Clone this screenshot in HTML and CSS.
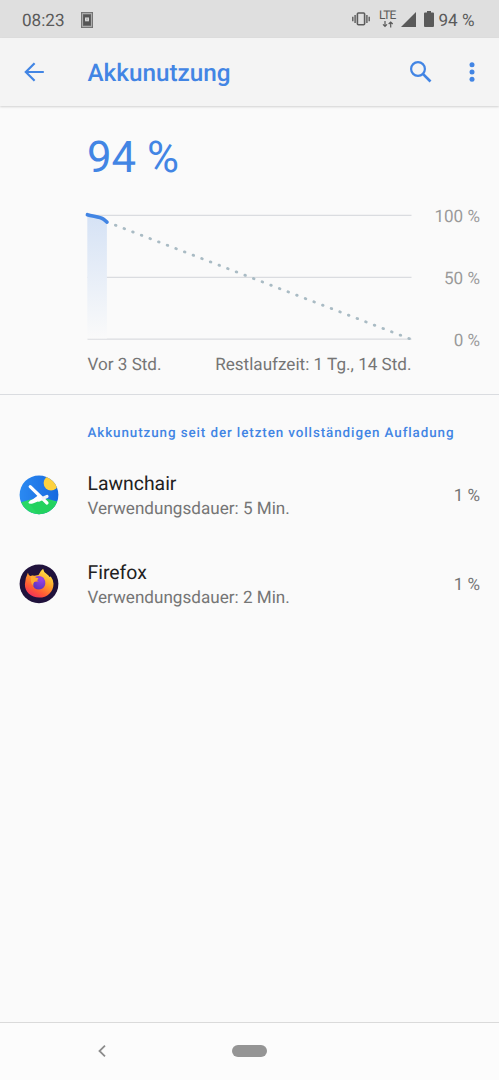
FILE: index.html
```html
<!DOCTYPE html>
<html lang="de">
<head>
<meta charset="utf-8">
<title>Akkunutzung</title>
<link rel="stylesheet" href="styles.css">
</head>
<body>
<div class="screen">
  <div class="status">
    <span class="clock">08:23</span>
    <svg class="note-icon" width="12" height="16" viewBox="0 0 12 16"><path fill="#707070" d="M0 0h12v16H0z"/><path fill="none" stroke="#c4c4c4" stroke-width=".8" d="M1.4 1.4h9.2v13.2H1.4z"/><path fill="#555" d="M2.4 3h7.2v10H2.4z"/><path fill="#ddd" d="M4 5.5h4v3.8H4z"/><path stroke="#888" stroke-width=".5" d="M4.8 6.1l2.4 2.6M7.2 6.1L4.8 8.7"/></svg>
    <svg class="vibrate" width="18" height="14" viewBox="0 0 18 14"><rect x="5.4" y="1" width="7.2" height="11.8" rx="1" fill="none" stroke="#5c5c5c" stroke-width="1.6"/><path stroke="#5c5c5c" stroke-width="1.4" d="M3.1 3v8M.8 4.7v4.6M14.9 3v8M17.2 4.7v4.6"/></svg>
    <div class="lte"><span>LTE</span>
      <svg width="12" height="7" viewBox="0 0 12 7"><path fill="none" stroke="#5a5a5a" stroke-width="1.2" d="M3 0v5.2M1 3.4l2 2 2-2M8.7 6.4V1M6.7 3l2-2 2 2"/></svg>
    </div>
    <svg class="signal" width="15" height="15" viewBox="0 0 15 15"><path fill="#5a5a5a" d="M15 0v15H0z"/></svg>
    <svg class="battery" width="10" height="16" viewBox="0 0 10 16"><path fill="#5a5a5a" d="M3 0h4v1.6h2q1 0 1 1V15q0 1-1 1H1q-1 0-1-1V2.6q0-1 1-1h2z"/></svg>
    <span class="level">94 %</span>
  </div>
  <header class="bar">
    <svg class="back" width="20" height="20" viewBox="0 0 20 20"><path fill="none" stroke="#4285e4" stroke-width="2.2" d="M19.8 10H2M10.6 1.2L1.8 10l8.8 8.8"/></svg>
    <h1>Akkunutzung</h1>
    <svg class="search" width="22" height="22" viewBox="0 0 22 22"><circle cx="8" cy="8" r="6.9" fill="none" stroke="#4285e4" stroke-width="2.2"/><path stroke="#4285e4" stroke-width="2.7" d="M12.9 12.9l7.6 7.6"/></svg>
    <svg class="more" width="6" height="20" viewBox="0 0 6 20"><g fill="#4285e4"><circle cx="3" cy="2.7" r="2.5"/><circle cx="3" cy="10" r="2.5"/><circle cx="3" cy="17.3" r="2.5"/></g></svg>
  </header>
  <section class="summary">
    <div class="percent">94 %</div>
    <div class="graph">
      <svg width="328" height="132" viewBox="84 211 328 132">
        <defs><linearGradient id="fade" x1="0" y1="0" x2="0" y2="1"><stop offset="0" stop-color="#d5e2f5"/><stop offset="1" stop-color="#fafafa"/></linearGradient></defs>
        <path stroke="#dadce0" stroke-width="1.3" d="M87.5 215.4H411.5M87.5 277.3H411.5M87.5 339.2H411.5"/>
        <path fill="url(#fade)" d="M87.3 215l13 2.6 6.6 4.4V338.5H87.3z"/>
        <path fill="none" stroke="#a9bbc4" stroke-width="2.8" stroke-linecap="round" stroke-dasharray=".6 8.65" d="M115.4 225.2L409.5 338.7"/>
        <path fill="none" stroke="#4285e4" stroke-width="3.6" stroke-linecap="round" stroke-linejoin="round" d="M87.4 214.7C93 216.5 100 216.7 103.5 219.2L107 222.1"/>
      </svg>
      <div class="scale"><span>100 %</span><span>50 %</span><span>0 %</span></div>
    </div>
    <div class="range"><span class="since">Vor 3 Std.</span><span class="left">Restlaufzeit: 1 Tg., 14 Std.</span></div>
  </section>
  <main class="usage">
    <h2>Akkunutzung seit der letzten vollständigen Aufladung</h2>
    <div class="row">
      <svg width="40" height="40" viewBox="0 0 40 40">
        <defs><clipPath id="disc"><circle cx="20" cy="19.8" r="19.4"/></clipPath><linearGradient id="sky" x1="0" y1="0" x2="1" y2="0"><stop stop-color="#2b8af2"/><stop offset="1" stop-color="#1769de"/></linearGradient></defs>
        <g clip-path="url(#disc)"><path fill="url(#sky)" d="M0 0h40v40H0z"/><circle cx="32" cy="8" r="7.4" fill="#fdd13e"/><path fill="#28d865" d="M0 28Q20 20 40 27V40H0z"/><path fill="#19c956" d="M11 29l19-5 9 6-10 10H19z" opacity=".35"/>
        <path fill="none" stroke="#fff" stroke-width="3.2" stroke-linecap="round" d="M11.2 11.6L28 28"/><path stroke="#f1f3f8" stroke-width="3.2" stroke-linecap="round" d="M28 21.5L20 25"/><path fill="#fff" d="M20 19.8l3.8 4.6-10 4.2q-4.3.8-4.4-1.2 1-2.3 4.8-3.4z"/></g>
      </svg>
      <div class="label"><div class="name">Lawnchair</div><div class="detail">Verwendungsdauer: 5 Min.</div></div>
      <span class="share">1 %</span>
    </div>
    <div class="row">
      <svg width="40" height="40" viewBox="0 0 40 40">
        <defs><linearGradient id="flame" x1=".8" y1="0" x2=".2" y2="1"><stop stop-color="#fff04e"/><stop offset=".4" stop-color="#ffa42b"/><stop offset=".72" stop-color="#ff5a35"/><stop offset="1" stop-color="#ef2862"/></linearGradient><radialGradient id="globe" cx=".7" cy=".2" r=".9"><stop stop-color="#a044e8"/><stop offset="1" stop-color="#5632bd"/></radialGradient></defs>
        <circle cx="20" cy="19.8" r="19.4" fill="#20123c"/>
        <path fill="url(#flame)" d="M8.9 8.7q.7 2.8 2.4 3.3 2-1 4.2-.3l4-.6q1.5-4 4.6-6.3.3 3 3.6 5.2 2.2 1.3 2.8 3l1.3-.6q2.4 3 2.7 7.3C34.5 28 28.3 33.6 20.2 33.6S5.6 28 5.9 20.3q.3-6.6 3-11.6z"/>
        <path fill="url(#globe)" d="M14.5 14q5.5-3.6 10-.3 2.3 3.1 1.8 6.4-1 5.4-6.3 5.5-5.5 0-6.5-5.5.3-1.6 1.8-2.2l4.4-.7z"/>
        <path fill="#ffab31" d="M11.9 12q3-1 4.8 1.5l2.8.8q-.1 1.6-3.4 2.8-2.6 2.4-1.5 4.9-2.6-2-2.7-5.2z"/>
      </svg>
      <div class="label"><div class="name">Firefox</div><div class="detail">Verwendungsdauer: 2 Min.</div></div>
      <span class="share">1 %</span>
    </div>
  </main>
  <nav class="nav">
    <svg class="nav-back" width="8" height="12" viewBox="0 0 8 12"><path fill="none" stroke="#8c8c8c" stroke-width="1.8" d="M7 .7L1.5 6 7 11.3"/></svg>
    <span class="home"></span>
  </nav>
</div>
</body>
</html>
```
FILE: styles.css
```css
* { box-sizing: border-box; }
body { margin: 0; background: #fafafa; font-family: Roboto, "Noto Sans", sans-serif; color: #757575; text-rendering: geometricPrecision; }
svg { display: block; flex: none; }
.screen { display: flex; flex-direction: column; width: 499px; height: 1080px; overflow: hidden; }
.status { display: flex; align-items: flex-start; height: 38px; flex: none; background: #dfdfdf; color: #5a5a5a; font-size: 17.1px; line-height: 20px; white-space: nowrap; }
.clock { width: 59px; margin-left: 22px; padding-top: 11px; }
.note-icon { margin-top: 12px; }
.vibrate { margin: 12px 0 0 259px; }
.lte { width: 19px; margin: 10px 0 0 9px; font-size: 12px; line-height: 11px; letter-spacing: -.7px; }
.lte span { display: block; }
.lte svg { margin: 0 0 0 3px; }
.signal { margin: 12px 0 0 3px; }
.battery { margin: 11px 0 0 8px; }
.level { margin: 11px 0 0 4.5px; }
.bar { display: flex; align-items: center; height: 68px; flex: none; background: #f4f4f4; box-shadow: 0 1px 2px rgba(0, 0, 0, .16); padding: 0 24px; color: #4285e4; }
.bar h1 { flex: 1; margin: 2px 0 0 43.5px; font-size: 24.3px; font-weight: 500; line-height: 30px; }
.search { margin-right: 37px; }
.summary { height: 289px; flex: none; border-bottom: 1.3px solid #dadce0; padding: 26px 19px 0 84px; }
.percent { height: 79px; padding-left: 3px; color: #4285e4; font-size: 43.7px; line-height: 51px; }
.graph { display: flex; justify-content: space-between; height: 132px; }
.scale { display: flex; flex-direction: column; justify-content: space-between; height: 144px; margin-top: -4px; text-align: right; font-size: 17.1px; line-height: 20px; color: #9a9a9a; }
.range { display: flex; justify-content: space-between; width: 327.5px; margin-top: 12px; padding-left: 3.5px; font-size: 17.1px; line-height: 20px; white-space: nowrap; }
.usage { flex: 1; padding: 29px 19px 0; }
.usage h2 { margin: 0 0 10px 68.5px; color: #4285e4; font-size: 13.4px; font-weight: 500; line-height: 20px; letter-spacing: .91px; white-space: nowrap; }
.row { display: flex; align-items: center; height: 88.7px; padding-bottom: 7px; }
.label { flex: 1; margin: 3px 0 0 28.5px; }
.name { color: #212121; font-size: 19.4px; line-height: 25px; }
.detail { font-size: 17.1px; line-height: 26px; }
.share { margin-top: 2px; font-size: 17.1px; }
.nav { display: flex; align-items: center; height: 58px; flex: none; border-top: 1.5px solid #dadada; background: #fcfcfc; padding-bottom: 2px; }
.nav-back { margin-left: 98px; }
.home { width: 35px; height: 12px; margin-left: 126px; border-radius: 6px; background: #959595; }
```
